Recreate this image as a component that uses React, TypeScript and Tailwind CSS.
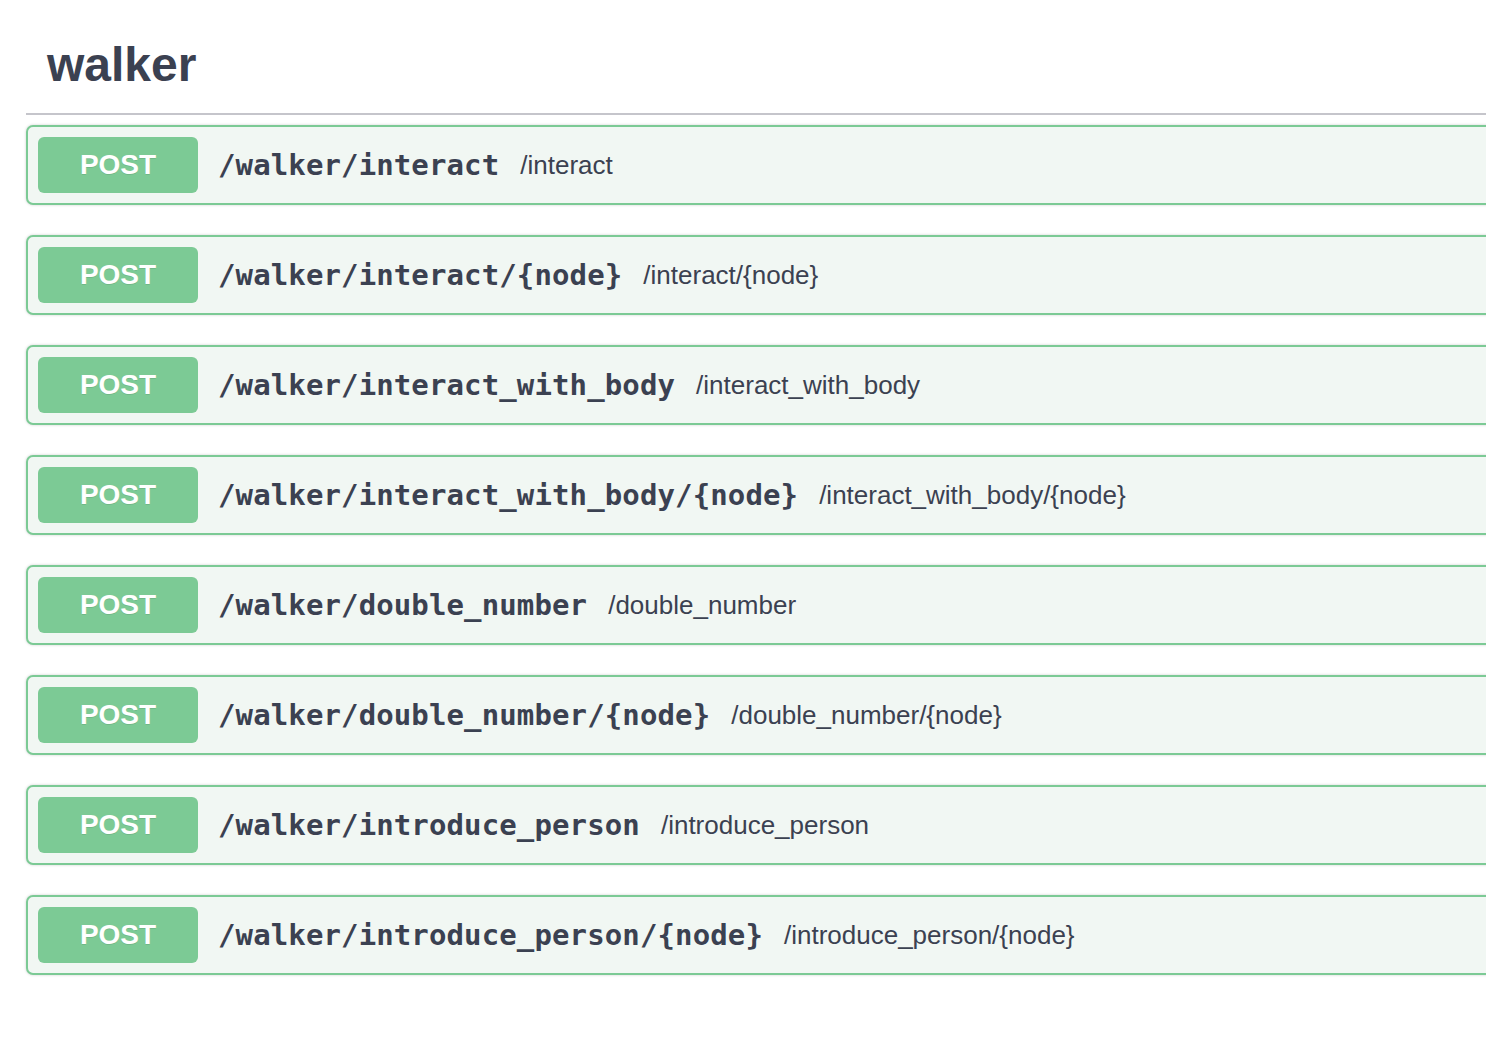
const ops = [
  { path: "/walker/interact", desc: "/interact" },
  { path: "/walker/interact/{node}", desc: "/interact/{node}" },
  { path: "/walker/interact_with_body", desc: "/interact_with_body" },
  { path: "/walker/interact_with_body/{node}", desc: "/interact_with_body/{node}" },
  { path: "/walker/double_number", desc: "/double_number" },
  { path: "/walker/double_number/{node}", desc: "/double_number/{node}" },
  { path: "/walker/introduce_person", desc: "/introduce_person" },
  { path: "/walker/introduce_person/{node}", desc: "/introduce_person/{node}" },
];

export default function App() {
  return (
    <div className="min-h-screen w-full overflow-hidden bg-white text-[#3b4151]">
      <div className="ml-[26px] w-[1480px]">
        {/* tag header */}
        <h3
          className="border-b-2 border-[#c5c5cb] pl-[21px] pt-[37px] pb-[20px] text-[48px] font-bold leading-[56px]"
          style={{ fontFamily: '"Liberation Sans", Arial, sans-serif' }}
        >
          walker
        </h3>

        {/* operations */}
        <div className="mt-[10px] flex flex-col gap-[30px]">
          {ops.map((op) => (
            <div
              key={op.path}
              className="flex h-[80px] items-center rounded-[7px] border-2 border-[#7cca95] bg-[#f1f7f3] p-[10px] shadow-[0_0_3px_rgba(0,0,0,0.19)]"
            >
              <span
                className="h-[56px] w-[160px] shrink-0 rounded-[6px] bg-[#7cca95] text-center text-[28px] font-bold leading-[56px] text-white [text-shadow:0_1px_0_rgba(0,0,0,0.1)]"
                style={{ fontFamily: '"Liberation Sans", Arial, sans-serif' }}
              >
                POST
              </span>
              <span
                className="pt-[2px] pl-[20px] pr-[21px] text-[29px] font-bold tracking-[0.12px]"
                style={{ fontFamily: '"DejaVu Sans Mono", monospace' }}
              >
                {op.path}
              </span>
              <span
                className="text-[26px]"
                style={{ fontFamily: '"Liberation Sans", Arial, sans-serif' }}
              >
                {op.desc}
              </span>
            </div>
          ))}
        </div>
      </div>
    </div>
  );
}
